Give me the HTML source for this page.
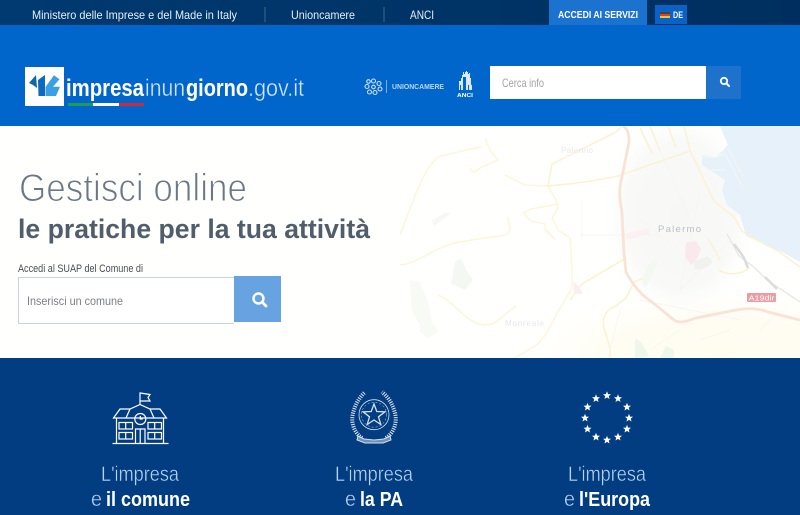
<!DOCTYPE html>
<html lang="it">
<head>
<meta charset="utf-8">
<title>impresainungiorno.gov.it</title>
<style>
html,body{margin:0;padding:0;width:800px;height:515px;overflow:hidden;background:#fff}
body{position:relative;font-family:"Liberation Sans",sans-serif}
.b{position:absolute;display:block}
svg{position:absolute;left:0;top:0}
text{font-family:"Liberation Sans",sans-serif}
</style>
</head>
<body>
<div class="b" style="left:0;top:0;width:800px;height:25px;background:linear-gradient(90deg,#003a70,#002f5f)"></div>
<div class="b" style="left:0;top:25px;width:800px;height:101px;background:#0066cc"></div>
<div class="b" style="left:0;top:126px;width:800px;height:232px;background:#fffffd"></div>
<div class="b" style="left:0;top:358px;width:800px;height:157px;background:#023d82"></div>
<div class="b" style="left:549px;top:0;width:98px;height:25px;background:#1c72cf"></div>
<div class="b" style="left:655px;top:5px;width:32px;height:19px;background:#0a62c4"></div>
<div class="b" style="left:490px;top:66px;width:216px;height:33px;background:#fff"></div>
<div class="b" style="left:706px;top:66px;width:35px;height:33px;background:#1f72cc"></div>
<div class="b" style="left:18px;top:277px;width:215px;height:45px;background:#fff;border:1px solid #c6d3e0;border-right:0"></div>
<div class="b" style="left:234px;top:276px;width:47px;height:46px;background:#66a3e0"></div>

<svg width="800" height="515" viewBox="0 0 800 515" xmlns="http://www.w3.org/2000/svg">
<defs>
<polygon id="s" points="0,-4.2 1.1,-1.4 4,-1.3 1.8,.6 2.5,3.5 0,1.9 -2.5,3.5 -1.8,.6 -4,-1.3 -1.1,-1.4" fill="#fff"/>
<clipPath id="hero"><rect x="0" y="126" width="800" height="232"/></clipPath>
<radialGradient id="city" cx=".5" cy=".5" r=".5"><stop offset="0" stop-color="#f7f7f5"/><stop offset=".7" stop-color="#f9f9f7"/><stop offset="1" stop-color="#fdfdfb" stop-opacity="0"/></radialGradient>
<radialGradient id="cream" cx=".7" cy="1" r=".8"><stop offset="0" stop-color="#fffcef"/><stop offset=".6" stop-color="#fffdf3"/><stop offset="1" stop-color="#fffffd" stop-opacity="0"/></radialGradient>
</defs>

<!-- map -->
<g clip-path="url(#hero)" fill="none">
<rect x="540" y="270" width="260" height="88" fill="url(#cream)"/>
<ellipse cx="680" cy="215" rx="78" ry="105" fill="url(#city)"/>
<polygon points="720,126 800,126 800,262 782,252 746,236 740,215 727,205 722,190 725,180 702,165 702,155 716,157 728,145" fill="#e7f1fa" stroke="none"/>
<path d="M702 157h14l8-3M703 170h22M706 180h18" stroke="#f7f8f8" stroke-width="1"/>
<path d="M723 150l20 38M728 148l15 28" stroke="#f4f6f6" stroke-width="1"/>
<!-- roads -->
<g stroke="#fdf5dc" stroke-width="1.500">
<path d="M622 126l-6 6-64 32-4 22M548 186c40-3 60-8 70-10l72-25 6 12 14 30 4 8 20 16 8 14 16 10 20 10 22 16" stroke="#fbf2d3"/>
<path d="M690 150l-6-24M640 128l12 25M650 126l10 25M668 126l8 22" stroke="#fbf2d3"/>
<path d="M559 204l-28 5-8 4 8 8 14 3 0 6 10 10-8-10M548 186l8 14 2 8-6 10 6 12 12 8 2 30 0 20-12 20-14 26-8 10-30 18-14 8"/>
<path d="M486 138c0 8 8 18 12 22l-18 8c-5 5-8 5-10 0M400 235c10-25 22-65 38-78 16-4 30-8 44-10M505 175l20 10 23 1"/>
<path d="M400 265c20-2 35-18 55-22 30-6 35-5 50-8 8-2 4-14 2-18M438 295c20 8 35 40 58 27 8-6 14-12 20-16"/>
<path d="M648 276l-14 6-8 16-10 8c-12 4-14 14-12 22l6 20 0 10" stroke="#fbf2d3"/>
<path d="M626 258l-44 26-12 16M719 270c8 6 24 4 30-2M720 260l-12-22" stroke="#fbf2d3"/>
</g>
<g stroke="#f5f4f0" stroke-width=".7">
<path d="M582 200v40M580 235h80M640 220l40 30M660 150l30 70M700 190l-20 100M730 240l-50 50M640 300l100 20M620 310l-10 40M680 330l-30 20M700 340l30-10M760 330l20-20"/>
</g>
<!-- motorway -->
<path d="M623 126c5 3 6 8 6 16l-7 35c-4 14-2 24 0 36l2 40 2 19c8 15 16 24 26 30l22 18c6 4 14 1 22-2l40-8c10-2 22-2 32 2l56 14" stroke="#f9e3d6" stroke-width="2.800"/>
<path d="M727 234l12 22 16 12 12 12 33 22" stroke="#e6e6e3" stroke-width="1.200"/>
<path d="M734 244l6 8 4 6 4 10M765 277l12 12" stroke="#dcdddb" stroke-width="2.500"/>
<g stroke="none">
<path d="M625 234l24-6 0 6-22 6z" fill="#fbf1f3"/>
<path d="M686 243l10-2 5 8-4 10-6 6-6-8z" fill="#f9e9ec"/>
<path d="M573 281l6 6 4 7-9 0z" fill="#fbeef3"/>
<path d="M650 262l8-2-8 20-6 8-2-10z" fill="#f3f9f0"/>
<path d="M432 220c6-2 10-6 14-8l4 2-8 6-8 6z" fill="#f6f8f3"/>
<path d="M455 262c5-5 8-3 10 6l8 12-8 10-14-6z" fill="#f5f8f2"/>
<path d="M410 280l10 2 8 20 4 20-10 6-10-16z" fill="#f8faf6"/>
<path d="M420 322l14 2 4 8-10 6-8-6z" fill="#f8faf6"/>
<path d="M635 338l6 4 8 14-14 2z" fill="#f1f6ea"/>
<path d="M666 346l8 4 0 8-14 0z" fill="#f1f6ea"/>
<path d="M693 262l14-6 6 6-8 6-10 2z" fill="#f1f2f0"/>
<rect x="747" y="293" width="29" height="9" rx="1" fill="#eb9da6"/>
</g>
<text x="748.5" y="300.5" font-size="7.5" fill="#fff" stroke="none" textLength="26" lengthAdjust="spacingAndGlyphs">A19dir</text>
<text x="658" y="232" font-size="9.5" fill="#bcbfc5" stroke="none" textLength="43" lengthAdjust="spacing">Palermo</text>
<text x="561" y="153" font-size="8" fill="#e8e9ec" stroke="none" textLength="32" lengthAdjust="spacing">Palermo</text>
<text x="505" y="326" font-size="8" fill="#e6e8eb" stroke="none" textLength="39" lengthAdjust="spacing">Monreale</text>
</g>

<!-- top bar -->
<g fill="#e6eef7" font-size="12">
<text x="32" y="19" textLength="205" lengthAdjust="spacingAndGlyphs">Ministero delle Imprese e del Made in Italy</text>
<text x="291" y="19" textLength="64" lengthAdjust="spacingAndGlyphs">Unioncamere</text>
<text x="410" y="19" textLength="24" lengthAdjust="spacingAndGlyphs">ANCI</text>
</g>
<path d="M265 7v15M384 7v15" stroke="#3f668f" stroke-width="1"/>
<text x="558" y="18" font-size="10.5" font-weight="700" fill="#fff" textLength="80" lengthAdjust="spacingAndGlyphs">ACCEDI AI SERVIZI</text>
<rect x="660" y="12" width="10" height="2" fill="#444"/><rect x="660" y="14" width="10" height="2" fill="#d8432c"/><rect x="660" y="16" width="10" height="2" fill="#f0c040"/>
<text x="673" y="18" font-size="9" font-weight="700" fill="#fff" textLength="10" lengthAdjust="spacingAndGlyphs">DE</text>

<!-- logo -->
<rect x="25" y="67" width="39" height="39" fill="#fff"/>
<polygon points="29,83 36,75 37,88 33,85" fill="#0f6aa3"/>
<polygon points="38,80 45,75 45,96 38.500,96" fill="#0d68c0"/>
<polygon points="45.500,87 54,75.300 59.500,79.300 53,86.700 60,86.700 56,96 45.500,96" fill="#3aa0e4"/>
<text x="66" y="96" font-size="24" font-weight="700" fill="#fff" textLength="78" lengthAdjust="spacingAndGlyphs">impresa</text>
<text x="145" y="96" font-size="24" fill="#d5e6f8" stroke="#0066cc" stroke-width=".4" textLength="40" lengthAdjust="spacingAndGlyphs">inun</text>
<text x="186" y="96" font-size="24" font-weight="700" fill="#fff" textLength="62" lengthAdjust="spacingAndGlyphs">giorno</text>
<text x="248" y="96" font-size="24" fill="#d5e6f8" stroke="#0066cc" stroke-width=".4" textLength="56" lengthAdjust="spacingAndGlyphs">.gov.it</text>
<rect x="68" y="103" width="25" height="3" fill="#1f9a57"/><rect x="93" y="103" width="26" height="3" fill="#fff"/><rect x="119" y="103" width="25" height="3" fill="#cf2a35"/>

<!-- unioncamere -->
<g fill="none" stroke="#cfe2f6" stroke-width="1.100">
<circle cx="373.500" cy="81" r="2"/><circle cx="379" cy="83.500" r="2"/><circle cx="380" cy="89" r="2"/><circle cx="375" cy="92.500" r="2"/><circle cx="369.500" cy="92" r="2"/><circle cx="367" cy="86.500" r="2"/><circle cx="368.500" cy="81.500" r="1.800"/><circle cx="373.500" cy="87" r="1.800"/>
</g>
<path d="M386.500 80v13" stroke="#7fb0e4" stroke-width="1"/>
<text x="392" y="89" font-size="7" font-weight="700" fill="#b9d6f3" textLength="52" lengthAdjust="spacingAndGlyphs">UNIONCAMERE</text>
<!-- anci -->
<path d="M459 90v-9h2v-3h1v-3h1v-3h1v2h1v-2h1v-1h1v1h1v2h1v-1h1v5h1v6l1 2v4h-3v-5h-1v5h-2v-13h-3v13h-2v-5h-1v5h-2z" fill="#d9e9fa"/>
<text x="457" y="97" font-size="5.500" font-weight="700" fill="#fff" textLength="16" lengthAdjust="spacingAndGlyphs">ANCI</text>

<!-- search top -->
<text x="502" y="87" font-size="12" fill="#a3a3a3" textLength="42" lengthAdjust="spacingAndGlyphs">Cerca info</text>
<circle cx="724" cy="81" r="3.200" fill="none" stroke="#fff" stroke-width="1.800"/><path d="M726.300 83.300l2.700 2.700" stroke="#fff" stroke-width="2" stroke-linecap="round"/>

<!-- hero text -->
<text x="19" y="201" font-size="39" fill="#6b7884" stroke="#fffffd" stroke-width="1.100" textLength="228" lengthAdjust="spacingAndGlyphs">Gestisci online</text>
<text x="18" y="238" font-size="27" font-weight="700" fill="#505e6c" textLength="352" lengthAdjust="spacingAndGlyphs">le pratiche per la tua attività</text>
<text x="18" y="272" font-size="11" fill="#4a4f55" textLength="125" lengthAdjust="spacingAndGlyphs">Accedi al SUAP del Comune di</text>
<text x="27" y="305" font-size="12" fill="#7b7f85" textLength="96" lengthAdjust="spacingAndGlyphs">Inserisci un comune</text>
<circle cx="258.500" cy="298.500" r="5" fill="none" stroke="#fff" stroke-width="2.400"/><path d="M262.300 302.300l3.700 3.700" stroke="#fff" stroke-width="2.800" stroke-linecap="round"/>

<!-- school icon -->
<g fill="none" stroke="#fff" stroke-width="1.200">
<path d="M140 405v-12l10 1.500-2 3 2 3.500-10 0"/>
<path d="M113.500 418l6.500-9h10l10-4.500 10 4.500h10l6.500 9z"/>
<path d="M130 409l-4 9M150 409l4 9"/>
<path d="M116.500 418v25M163.500 418v25M112.500 443.500h56"/>
<circle cx="140.300" cy="419" r="5.500"/><path d="M140.300 416v3h2.500"/>
<rect x="119" y="422.500" width="13.500" height="6.500"/><rect x="119" y="432.500" width="13.500" height="6.500"/>
<rect x="148" y="422.500" width="13.500" height="6.500"/><rect x="148" y="432.500" width="13.500" height="6.500"/>
<path d="M125.700 422.500v6.500M125.700 432.500v6.500M154.700 422.500v6.500M154.700 432.500v6.500"/>
<path d="M135.500 443v-14h9.500v14M140.200 429v14"/>
</g>

<!-- emblem -->
<g fill="none" stroke="#d5e0ec">
<path d="M362 438c-9-6-12-18-8-28 2-7 6-13 11-18" stroke-width="4" stroke-dasharray="1.100 1.200"/>
<path d="M386 438c9-6 12-18 8-28-2-7-6-13-12-18" stroke-width="4" stroke-dasharray="1.100 1.200"/>
<circle cx="374" cy="414.700" r="15" stroke-width=".8"/>
<circle cx="374" cy="414.700" r="12.500" stroke-width=".5" stroke-dasharray="2 2"/>
<polygon points="374,404 376.800,411.500 385,411.800 378.500,416.800 380.800,424.500 374,420 367.200,424.500 369.500,416.800 363,411.800 371.200,411.500" stroke-width="1.300"/>
<path d="M358 436l6 3 10 1 10-1 6-3 1 4-8 3h-18l-8-3z" stroke-width="1" fill="#6f8fb5"/>
</g>

<!-- EU stars -->
<g>
<use href="#s" x="607" y="395.500"/><use href="#s" x="618" y="398.500"/><use href="#s" x="627" y="407"/><use href="#s" x="629" y="418"/><use href="#s" x="627" y="429"/><use href="#s" x="618" y="437"/><use href="#s" x="607" y="440"/><use href="#s" x="596" y="437"/><use href="#s" x="587.500" y="429"/><use href="#s" x="585" y="418"/><use href="#s" x="587.500" y="407"/><use href="#s" x="596" y="398.500"/>
</g>

<!-- bottom text -->
<g font-size="21" fill="#b7d3ee" stroke="#023d82" stroke-width=".4">
<text x="101" y="481" textLength="78" lengthAdjust="spacingAndGlyphs">L'impresa</text>
<text x="335" y="481" textLength="78" lengthAdjust="spacingAndGlyphs">L'impresa</text>
<text x="568" y="481" textLength="78" lengthAdjust="spacingAndGlyphs">L'impresa</text>
<text x="91" y="506" textLength="11" lengthAdjust="spacingAndGlyphs">e</text>
<text x="345" y="506" textLength="11" lengthAdjust="spacingAndGlyphs">e</text>
<text x="564" y="506" textLength="11" lengthAdjust="spacingAndGlyphs">e</text>
</g>
<g font-size="20" font-weight="700" fill="#fff">
<text x="106" y="506" textLength="84" lengthAdjust="spacingAndGlyphs">il comune</text>
<text x="360" y="506" textLength="43" lengthAdjust="spacingAndGlyphs">la PA</text>
<text x="579" y="506" textLength="71" lengthAdjust="spacingAndGlyphs">l'Europa</text>
</g>
</svg>
</body>
</html>
